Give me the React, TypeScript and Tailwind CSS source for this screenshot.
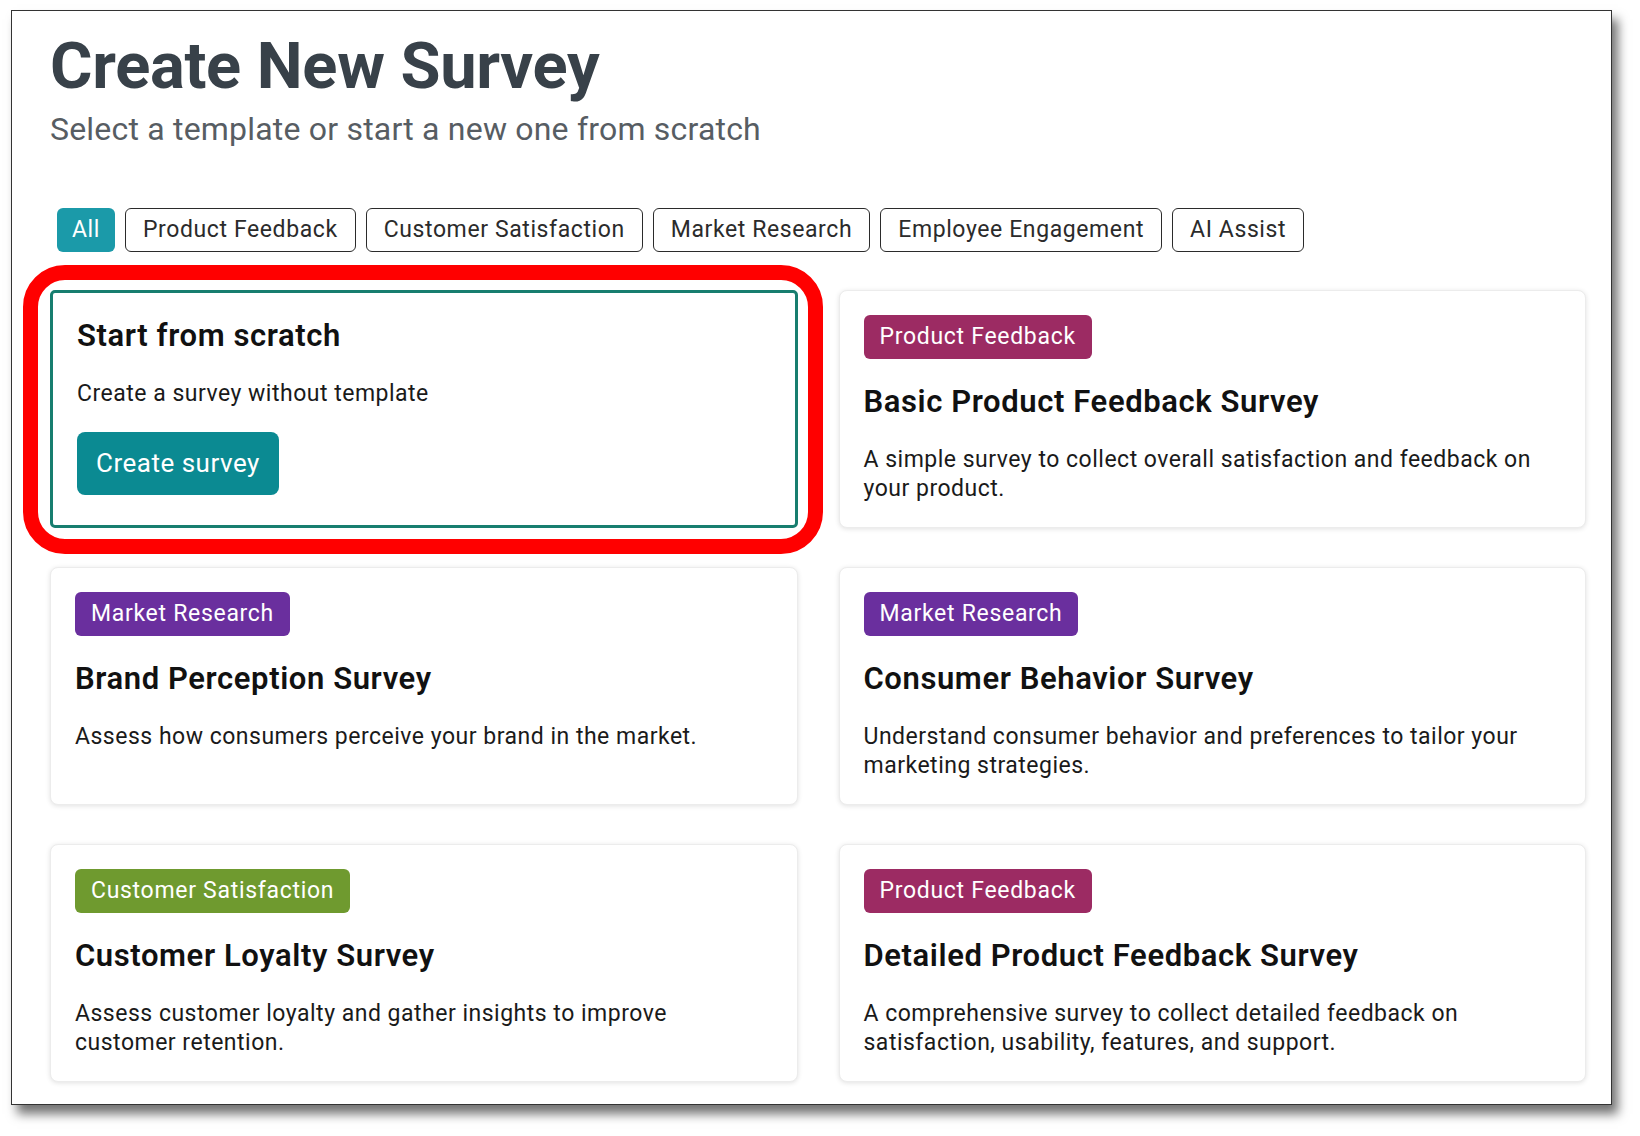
const filters = [
  "All",
  "Product Feedback",
  "Customer Satisfaction",
  "Market Research",
  "Employee Engagement",
  "AI Assist",
];

type Template = {
  tag: string;
  tagClass: string;
  title: string;
  description: string;
};

const templates: Template[] = [
  {
    tag: "Product Feedback",
    tagClass: "bg-[#9c2b63]",
    title: "Basic Product Feedback Survey",
    description: "A simple survey to collect overall satisfaction and feedback on your product.",
  },
  {
    tag: "Market Research",
    tagClass: "bg-[#6a2f9e]",
    title: "Brand Perception Survey",
    description: "Assess how consumers perceive your brand in the market.",
  },
  {
    tag: "Market Research",
    tagClass: "bg-[#6a2f9e]",
    title: "Consumer Behavior Survey",
    description: "Understand consumer behavior and preferences to tailor your marketing strategies.",
  },
  {
    tag: "Customer Satisfaction",
    tagClass: "bg-[#6f9a2f]",
    title: "Customer Loyalty Survey",
    description: "Assess customer loyalty and gather insights to improve customer retention.",
  },
  {
    tag: "Product Feedback",
    tagClass: "bg-[#9c2b63]",
    title: "Detailed Product Feedback Survey",
    description: "A comprehensive survey to collect detailed feedback on satisfaction, usability, features, and support.",
  },
];

const TemplateCard = ({ t }: { t: Template }) => (
  <div className="flex flex-col gap-6 rounded-lg border border-[#ececec] bg-white p-6 shadow-[0_1px_5px_rgba(0,0,0,0.12)]">
    <div>
      <span
        className={`inline-flex h-[44px] items-center rounded-md px-[16px] text-[23px] tracking-[0.7px] text-white ${t.tagClass}`}
      >
        {t.tag}
      </span>
    </div>
    <h3 className="text-[31px] leading-[38px] font-semibold tracking-[0.6px] text-[#111]">{t.title}</h3>
    <p className="text-[23px] leading-[29px] tracking-[0.5px] text-[#1a1a1a]">{t.description}</p>
  </div>
);

export default function App() {
  return (
    <div className="min-h-screen bg-white pt-[10px] pl-[11px] font-['Roboto',sans-serif]">
      <div className="w-[1601px] border border-[#333] bg-white pt-[16px] pr-[25px] pb-[22px] pl-[38px] shadow-[6px_9px_10px_rgba(0,0,0,0.55)]">
        <h1 className="text-[65px] leading-[79px] font-bold tracking-[-0.3px] text-[#384149]">Create New Survey</h1>
        <p className="mt-[3px] text-[32px] leading-[40px] tracking-[0.2px] text-[#575d63]">
          Select a template or start a new one from scratch
        </p>

        <div className="mt-[59px] ml-[7px] flex gap-[10px]">
          {filters.map((f, i) =>
            i === 0 ? (
              <button
                key={f}
                className="h-[44px] rounded-md bg-[#1b9aa9] px-[15px] text-[23px] tracking-[0.6px] text-white"
              >
                {f}
              </button>
            ) : (
              <button
                key={f}
                className="h-[44px] rounded-md border-[1.5px] border-[#2b2b2b] bg-white px-[17px] text-[23px] tracking-[0.6px] text-[#2b2b2b]"
              >
                {f}
              </button>
            )
          )}
        </div>

        <div className="mt-[38px] grid grid-cols-2 gap-x-[41px] gap-y-[39px]">
          <div className="relative">
            <div className="pointer-events-none absolute -top-[25px] -right-[25px] -bottom-[26px] -left-[27px] rounded-[42px] border-[15px] border-[#ff0000]" />
            <div className="relative flex h-full flex-col items-start gap-6 rounded-[5px] border-[3px] border-[#177e6f] bg-white p-6">
              <h3 className="text-[31px] leading-[38px] font-semibold tracking-[0.6px] text-[#111]">Start from scratch</h3>
              <p className="text-[23px] leading-[29px] tracking-[0.5px] text-[#1a1a1a]">Create a survey without template</p>
              <button className="h-[63px] rounded-lg bg-[#0b8a92] px-[19px] text-[26px] tracking-[0.5px] text-white">
                Create survey
              </button>
            </div>
          </div>
          {templates.map((t) => (
            <TemplateCard key={t.title} t={t} />
          ))}
        </div>
      </div>
    </div>
  );
}
